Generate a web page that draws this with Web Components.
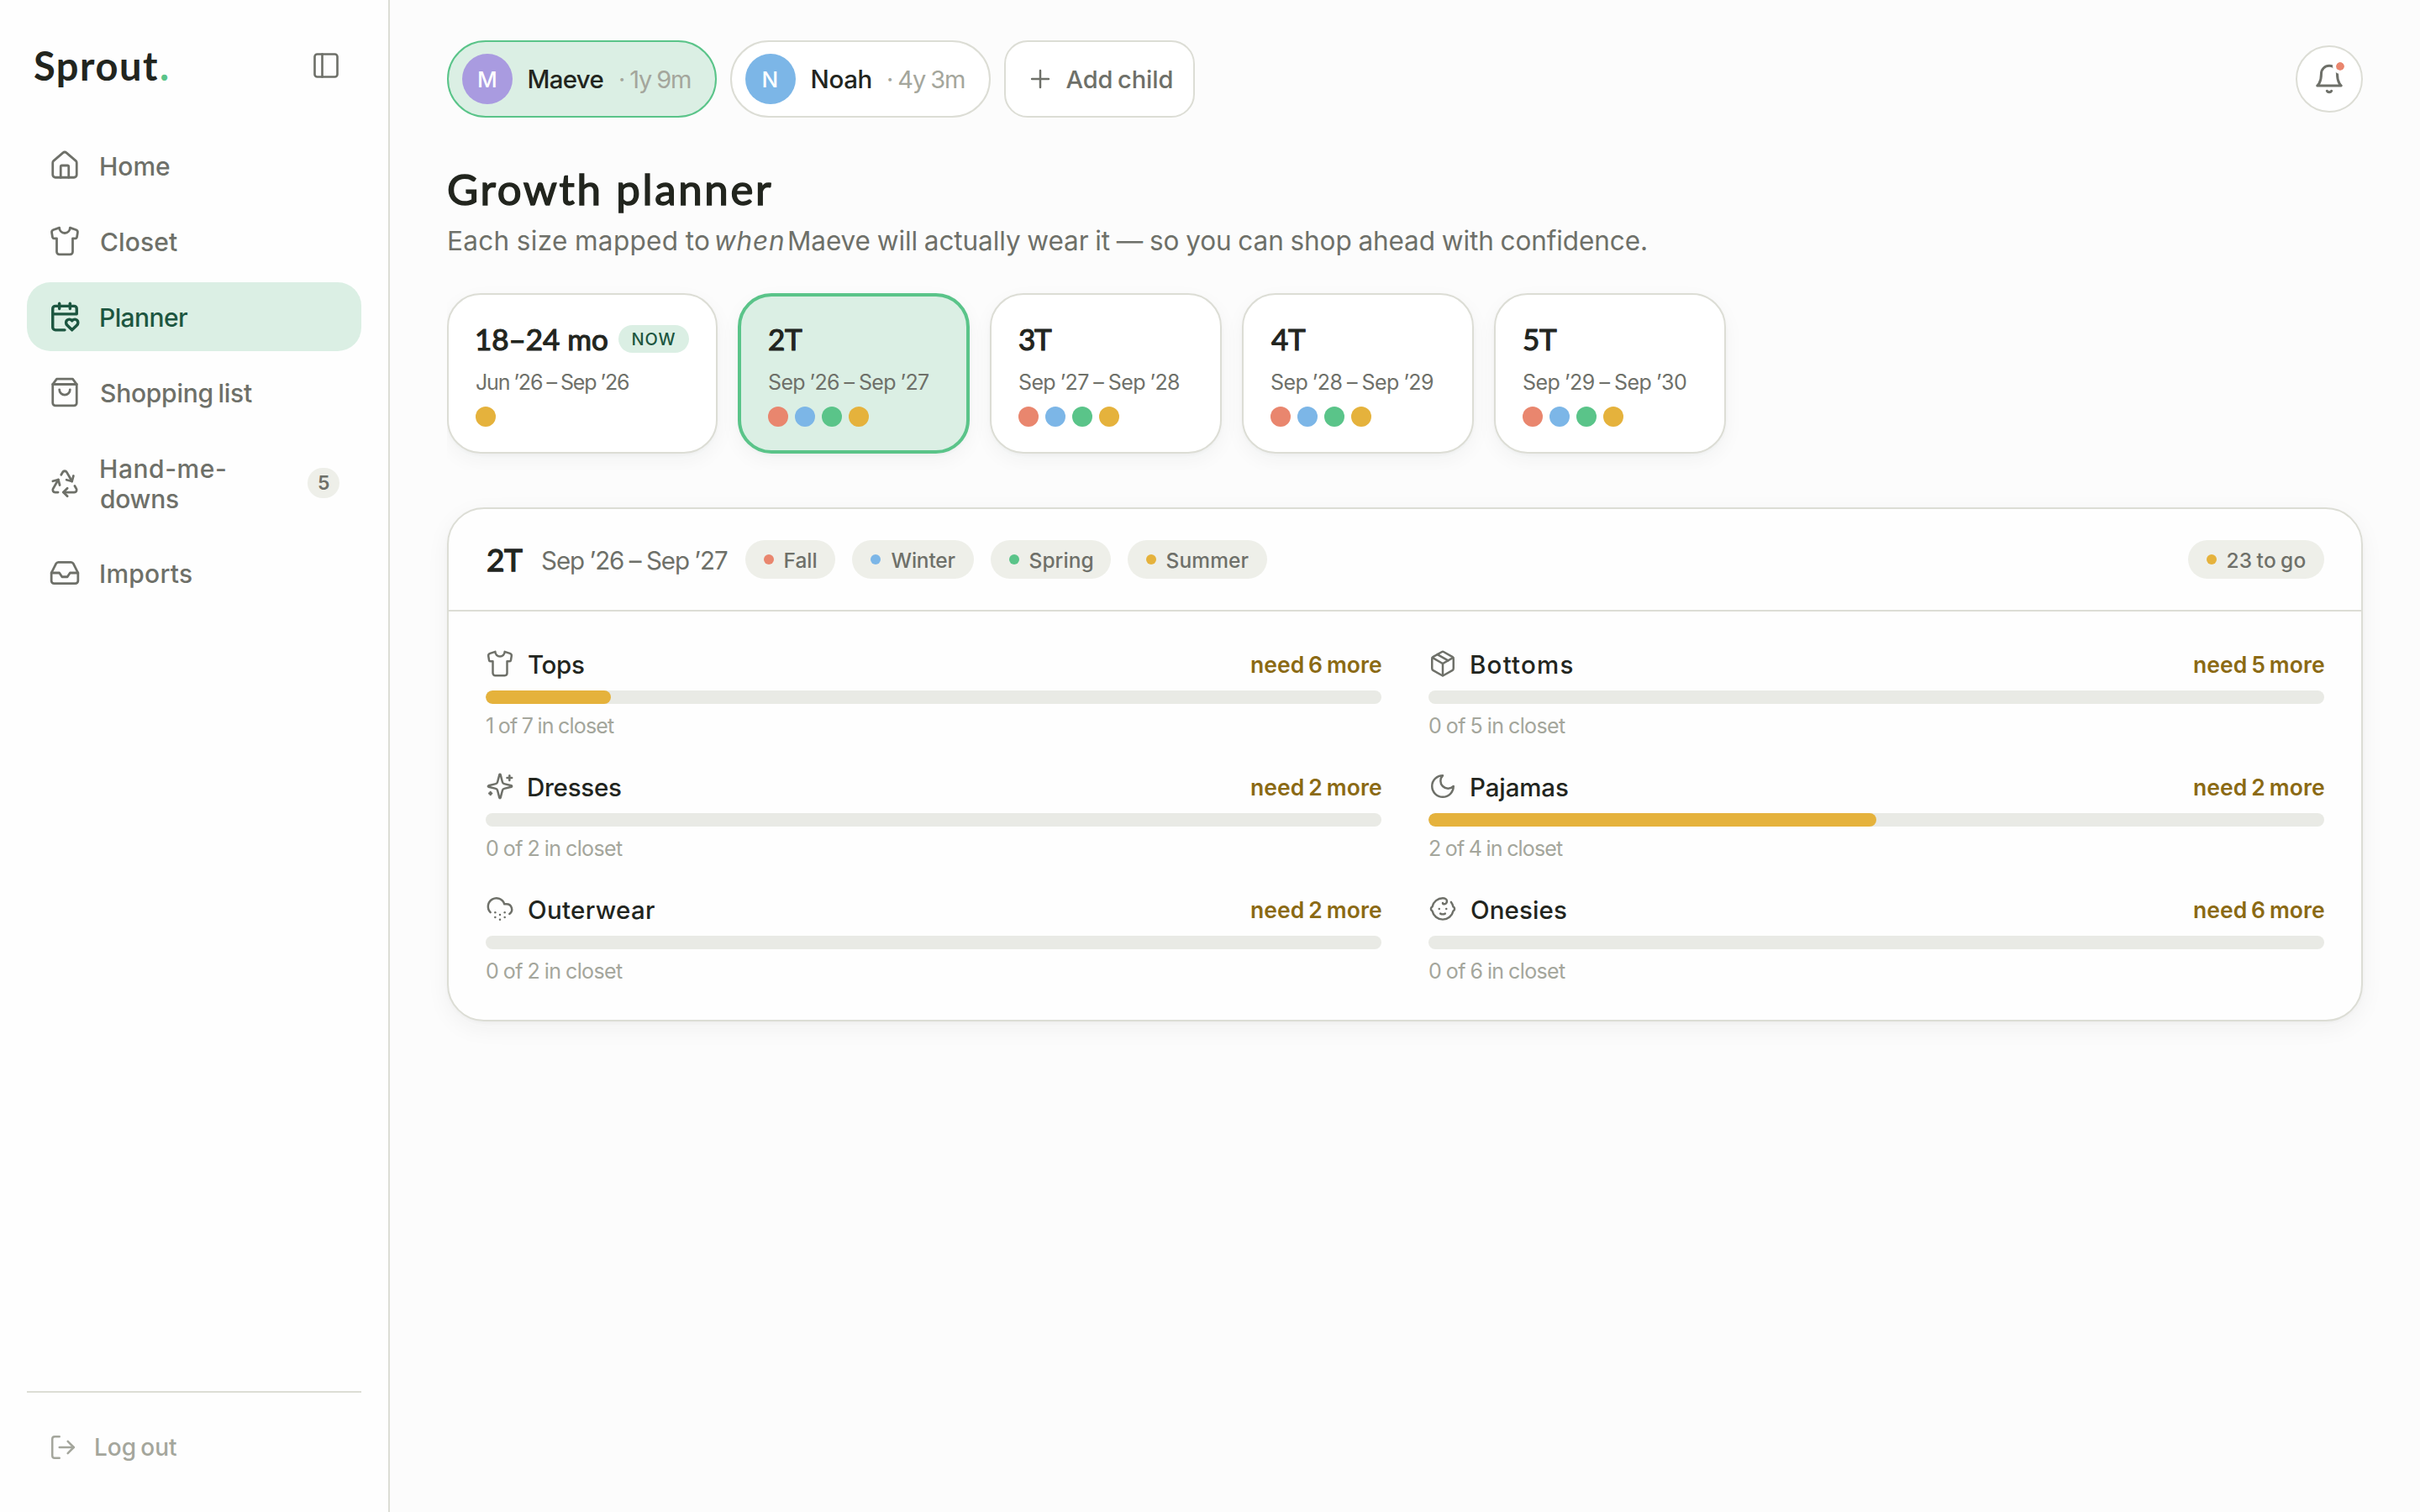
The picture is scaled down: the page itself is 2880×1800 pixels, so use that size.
<!DOCTYPE html>
<html lang="en">
<head>
<meta charset="utf-8">
<title>Sprout – Growth planner</title>
<style>
  html, body { margin: 0; height: 100%; }
  body {
    --ink: #22251e; --muted: #6e7069; --faint: #a4a69c; --line: #dcddd5; --chip: #eeefe9;
    --mint: #dbefe4; --forest: #1c5640; --green: #5ac489; --coral: #e9866e; --sky: #7cb6e7; --amber: #e5b23c;
    --body: Inter, "Liberation Sans", sans-serif;
    --display: Lato, Inter, sans-serif;
    background: #fcfcfc; color: var(--ink); font-family: var(--body); overflow: hidden;
  }
</style>
</head>
<body>
<sprout-app></sprout-app>
<script>
const ICONS = {
  panel: '<rect width="18" height="18" x="3" y="3" rx="2"/><path d="M9 3v18"/>',
  home: '<path d="M15 21v-8a1 1 0 0 0-1-1h-4a1 1 0 0 0-1 1v8"/><path d="M3 10a2 2 0 0 1 .709-1.528l7-5.999a2 2 0 0 1 2.582 0l7 5.999A2 2 0 0 1 21 10v9a2 2 0 0 1-2 2H5a2 2 0 0 1-2-2z"/>',
  shirt: '<path d="M20.38 3.46 16 2a4 4 0 0 1-8 0L3.62 3.46a2 2 0 0 0-1.34 2.23l.58 3.47a1 1 0 0 0 .99.84H6v10c0 1.1.9 2 2 2h8a2 2 0 0 0 2-2V10h2.15a1 1 0 0 0 .99-.84l.58-3.47a2 2 0 0 0-1.34-2.23z"/>',
  planner: '<path d="M3 10h18V6a2 2 0 0 0-2-2H5a2 2 0 0 0-2 2v14a2 2 0 0 0 2 2h7"/><path d="M8 2v4"/><path d="M16 2v4"/><path d="M21.29 14.7a2.43 2.43 0 0 0-2.65-.52c-.3.12-.57.3-.8.53l-.34.34-.35-.34a2.43 2.43 0 0 0-2.65-.53c-.3.12-.56.3-.79.53-.95.94-1 2.53.2 3.74L17.5 22l3.6-3.55c1.2-1.21 1.14-2.8.19-3.74Z"/>',
  bag: '<path d="M6 2 3 6v14a2 2 0 0 0 2 2h14a2 2 0 0 0 2-2V6l-3-4Z"/><path d="M3 6h18"/><path d="M16 10a4 4 0 0 1-8 0"/>',
  recycle: '<path d="M7 19H4.815a1.83 1.83 0 0 1-1.57-.881 1.785 1.785 0 0 1-.004-1.784L7.196 9.5"/><path d="M11 19h8.203a1.83 1.83 0 0 0 1.556-.89 1.784 1.784 0 0 0 0-1.775l-1.226-2.12"/><path d="m14 16-3 3 3 3"/><path d="M8.293 13.596 7.196 9.5 3.1 10.598"/><path d="m9.344 5.811 1.093-1.892A1.83 1.83 0 0 1 11.985 3a1.784 1.784 0 0 1 1.546.888l3.943 6.843"/><path d="m13.378 9.633 4.096 1.098 1.097-4.096"/>',
  inbox: '<path d="M22 12h-6l-2 3h-4l-2-3H2"/><path d="M5.45 5.11 2 12v6a2 2 0 0 0 2 2h16a2 2 0 0 0 2-2v-6l-3.45-6.89A2 2 0 0 0 16.76 4H7.24a2 2 0 0 0-1.79 1.11z"/>',
  logout: '<path d="m16 17 5-5-5-5"/><path d="M21 12H9"/><path d="M9 21H5a2 2 0 0 1-2-2V5a2 2 0 0 1 2-2h4"/>',
  plus: '<path d="M5 12h14"/><path d="M12 5v14"/>',
  bell: '<path d="M6 8a6 6 0 0 1 12 0c0 7 3 9 3 9H3s3-2 3-9"/><path d="M10.3 21a1.94 1.94 0 0 0 3.4 0"/>',
  sparkles: '<path d="M9.937 15.5A2 2 0 0 0 8.5 14.063l-6.135-1.582a.5.5 0 0 1 0-.962L8.5 9.936A2 2 0 0 0 9.937 8.5l1.582-6.135a.5.5 0 0 1 .963 0L14.063 8.5A2 2 0 0 0 15.5 9.937l6.135 1.581a.5.5 0 0 1 0 .964L15.5 14.063a2 2 0 0 0-1.437 1.437l-1.582 6.135a.5.5 0 0 1-.963 0z"/><path d="M20 3v4"/><path d="M22 5h-4"/><path d="M4 17v2"/><path d="M5 18H3"/>',
  snow: '<path d="M4 14.899A7 7 0 1 1 15.71 8h1.79a4.5 4.5 0 0 1 2.5 8.242"/><path d="M8 15h.01"/><path d="M8 19h.01"/><path d="M12 17h.01"/><path d="M12 21h.01"/><path d="M16 15h.01"/><path d="M16 19h.01"/>',
  box: '<path d="M11 21.73a2 2 0 0 0 2 0l7-4A2 2 0 0 0 21 16V8a2 2 0 0 0-1-1.73l-7-4a2 2 0 0 0-2 0l-7 4A2 2 0 0 0 3 8v8a2 2 0 0 0 1 1.73z"/><path d="M12 22V12"/><path d="M3.29 7 12 12l8.71-5"/><path d="m7.5 4.27 9 5.15"/>',
  moon: '<path d="M12 3a6 6 0 0 0 9 9 9 9 0 1 1-9-9Z"/>',
  baby: '<path d="M9 12h.01"/><path d="M15 12h.01"/><path d="M10 16c.5.3 1.2.5 2 .5s1.5-.2 2-.5"/><path d="M19 6.3a9 9 0 0 1 1.8 3.9 2 2 0 0 1 0 3.6 9 9 0 0 1-17.6 0 2 2 0 0 1 0-3.6A9 9 0 0 1 12 3c2 0 3.5 1.1 3.5 2.5s-.9 2.5-2 2.5c-.8 0-1.5-.4-1.5-1"/>'
};

class Base extends HTMLElement {
  connectedCallback() {
    if (this.shadowRoot) return;
    this.attachShadow({ mode: 'open' }).innerHTML = this.view();
  }
  a(name, fallback = '') { return this.getAttribute(name) ?? fallback; }
}

customElements.define('s-icon', class extends Base {
  view() {
    const s = this.a('size', 38);
    return `<style>:host{display:block;flex:none;width:${s}px;height:${s}px}svg{display:block}</style>
      <svg width="${s}" height="${s}" viewBox="0 0 24 24" fill="none" stroke="currentColor" stroke-width="${this.a('stroke', 1.75)}" stroke-linecap="round" stroke-linejoin="round">${ICONS[this.a('name')]}</svg>`;
  }
});

/* A single line of text whose tracking is set so that its ink fills the width w. */
const pen = document.createElement('canvas').getContext('2d');
customElements.define('s-text', class extends Base {
  view() {
    const size = +this.a('size', 30), weight = this.a('weight', 500), w = +this.a('w');
    const display = this.hasAttribute('display'), slant = this.hasAttribute('italic') ? 'italic' : 'normal';
    const text = this.a('text'), spaces = text.split(' ').length - 1;
    pen.font = `${slant} ${weight} ${size}px ${display ? 'Lato' : 'Inter'}`;
    const m = pen.measureText(text), ink = m.actualBoundingBoxLeft + m.actualBoundingBoxRight;
    const word = display ? 0 : (weight < 500 ? -0.03 : -0.07) * size;
    const track = text.length > 1 ? (w - ink - spaces * word) / (text.length - 1) : 0;
    return `<style>
      :host{display:block;flex:none;width:${w}px;padding-top:${this.a('drop', display ? 0 : 2)}px;white-space:nowrap;color:${this.a('color', 'inherit')};
        font:${slant} ${weight} ${size}px/1.2 ${display ? 'var(--display)' : 'var(--body)'}}
      span{display:block;width:max-content;margin-left:${m.actualBoundingBoxLeft}px;letter-spacing:${track.toFixed(3)}px;word-spacing:${word}px;
        -webkit-text-stroke:${this.a('thicken', 0)}px currentColor;stroke-linejoin:round}
      </style><span>${text}</span>`;
  }
});

customElements.define('s-dot', class extends Base {
  view() {
    const s = this.a('size', 24);
    return `<style>:host{display:block;flex:none;width:${s}px;height:${s}px;border-radius:50%;background:var(--${this.a('tone')})}</style>`;
  }
});

customElements.define('nav-item', class extends Base {
  view() {
    const on = this.hasAttribute('active');
    return `<style>
      :host{display:flex;align-items:center;box-sizing:border-box;min-height:82px;padding:0 26px;border-radius:28px;
        color:${on ? 'var(--forest)' : 'var(--muted)'};background:${on ? 'var(--mint)' : 'none'}}
      .label{margin-left:24px;flex:1;display:flex;flex-direction:column}
      </style>
      <s-icon name="${this.a('icon')}" stroke="${on ? 2.15 : 1.75}"></s-icon><div class="label"><slot></slot></div><slot name="end"></slot>`;
  }
});

customElements.define('app-sidebar', class extends Base {
  view() {
    return `<style>
      :host{display:flex;flex-direction:column;box-sizing:border-box;width:464px;height:1800px;flex:none;background:#fefefe;border-right:2px solid var(--line)}
      header{height:156px;box-sizing:border-box;display:flex;align-items:center;padding:0 56px 0 41px;justify-content:space-between;color:var(--muted)}
      .logo{display:flex;gap:4px;color:var(--ink)}
      nav{display:flex;flex-direction:column;gap:8px;padding:0 32px;flex:1}
      .two{height:117px}
      .badge{width:38px;height:36px;border-radius:18px;background:var(--chip);display:flex;align-items:center;justify-content:center}
      footer{margin:0 32px;border-top:2px solid var(--line);height:144px;box-sizing:border-box;padding:0 26px 12px;display:flex;align-items:center;gap:22px;color:var(--faint)}
      .tight{display:flex;height:36px;align-items:center}
      </style>
      <header><div class="logo"><s-text display text="Sprout" w="147" size="47" weight="700"></s-text><s-text display text="." w="7" size="47" weight="700" color="var(--green)"></s-text></div>
        <s-icon name="panel" size="36"></s-icon></header>
      <nav>
        <nav-item icon="home"><s-text text="Home" w="82"></s-text></nav-item>
        <nav-item icon="shirt"><s-text text="Closet" w="91"></s-text></nav-item>
        <nav-item icon="planner" active><s-text text="Planner" w="103"></s-text></nav-item>
        <nav-item icon="bag"><s-text text="Shopping list" w="180"></s-text></nav-item>
        <nav-item icon="recycle" class="two"><div class="tight"><s-text text="Hand-me-" w="148"></s-text></div><div class="tight"><s-text text="downs" w="92"></s-text></div>
          <div class="badge" slot="end"><s-text text="5" w="12" size="23" weight="600"></s-text></div></nav-item>
        <nav-item icon="inbox"><s-text text="Imports" w="108"></s-text></nav-item>
      </nav>
      <footer><s-icon name="logout" size="34"></s-icon><s-text text="Log out" w="96" size="28"></s-text></footer>`;
  }
});

customElements.define('child-chip', class extends Base {
  view() {
    const on = this.hasAttribute('active');
    return `<style>
      :host{display:flex;align-items:center;box-sizing:border-box;height:92px;padding:0 29px 0 16px;border-radius:46px;width:${this.a('width')}px;
        border:2px solid var(${on ? '--green' : '--line'});background:${on ? 'var(--mint)' : '#fff'}}
      .av{width:60px;height:60px;border-radius:50%;display:flex;align-items:center;justify-content:center;margin-right:19.5px;background:${this.a('tone')}}
      .age{margin-left:auto}
      </style>
      <div class="av"><s-text text="${this.a('name')[0]}" w="${this.a('iw')}" size="26" weight="500" color="#fff"></s-text></div>
      <s-text text="${this.a('name')}" w="${this.a('nw')}" size="29.5" weight="500"></s-text>
      <s-text class="age" text="· ${this.a('age')}" w="${this.a('aw')}" size="29" weight="400" color="var(--faint)"></s-text>`;
  }
});

customElements.define('top-bar', class extends Base {
  view() {
    return `<style>
      :host{display:flex;align-items:center;gap:16px;height:92px}
      .add{display:flex;align-items:center;box-sizing:border-box;width:227px;height:92px;border:2px solid var(--line);border-radius:28px;background:#fff;padding-left:24px;gap:13.5px;color:var(--muted)}
      .bell{position:relative;margin-left:auto;box-sizing:border-box;width:80px;height:80px;border:2px solid var(--line);border-radius:50%;background:#fff;display:flex;align-items:center;justify-content:center;color:var(--muted)}
      .bell i{position:absolute;left:42px;top:14px;width:10px;height:10px;border:4px solid #fff;border-radius:50%;background:var(--coral);background-clip:padding-box}
      </style>
      <child-chip active name="Maeve" age="1y 9m" tone="#a99be0" width="321" iw="20" nw="88" aw="84"></child-chip>
      <child-chip name="Noah" age="4y 3m" tone="var(--sky)" width="310" iw="17" nw="70" aw="91"></child-chip>
      <div class="add"><s-icon name="plus" size="34"></s-icon><s-text text="Add child" w="126" size="29" drop="3"></s-text></div>
      <div class="bell"><s-icon name="bell" stroke="1.9"></s-icon><i></i></div>`;
  }
});

customElements.define('size-card', class extends Base {
  view() {
    const on = this.hasAttribute('active');
    return `<style>
      :host{display:flex;flex-direction:column;justify-content:center;box-sizing:border-box;height:191px;flex:none;width:${this.a('width', 276)}px;padding:0 32px;border-radius:40px;
        border:${on ? '4px solid var(--green)' : '2px solid var(--line)'};background:${on ? 'var(--mint)' : '#fff'};
        box-shadow:0 2px 4px rgba(30,35,45,.03),0 8px 24px rgba(30,35,45,.045)}
      .t{height:44px;margin-bottom:1px;display:flex;align-items:center;gap:13px}
      .d{height:31px;margin:12px 0 15px;display:flex;align-items:center;color:var(--muted)}
      .s{display:flex;gap:8px}
      .t,.d{padding-left:1px}
      </style>
      <div class="t"><s-text display text="${this.a('label')}" w="${this.a('lw')}" size="35" weight="400" thicken="1.2"></s-text><slot></slot></div>
      <div class="d"><s-text text="${this.a('dates')}" w="${this.a('dw')}" size="25" weight="400"></s-text></div>
      <div class="s">${this.a('seasons').split(' ').map(t => `<s-dot tone="${t}"></s-dot>`).join('')}</div>`;
  }
});

customElements.define('s-pill', class extends Base {
  view() {
    return `<style>
      :host{display:flex;align-items:center;box-sizing:border-box;flex:none;height:46px;width:${this.a('width')}px;padding-left:22px;gap:12.5px;border-radius:23px;background:var(--chip);color:var(--muted)}
      </style><s-dot size="12" tone="${this.a('tone')}"></s-dot><s-text text="${this.a('text')}" w="${this.a('w')}" size="24.5" drop="3"></s-text>`;
  }
});

customElements.define('category-row', class extends Base {
  view() {
    return `<style>
      :host{display:block}
      .h{display:flex;align-items:center;height:40px;color:var(--muted)}
      .h>:nth-child(2){margin-left:17px}
      .h>:nth-child(3){margin-left:auto}
      .bar{height:16px;margin:12px 0 10px;border-radius:8px;background:#e9eae5;overflow:hidden}
      .bar div{height:16px;border-radius:8px;background:var(--amber);width:${this.a('fill', 0)}%}
      .n{height:30px;margin-bottom:1px;display:flex;align-items:center;padding-left:1px}
      </style>
      <div class="h"><s-icon name="${this.a('icon')}" size="34"></s-icon>
        <s-text text="${this.a('name')}" w="${this.a('nw')}" size="29.5" color="var(--ink)" drop="4"></s-text>
        <s-text text="need ${this.a('need')} more" w="155" size="26.5" weight="600" color="#8b6a14" drop="4"></s-text></div>
      <div class="bar"><div></div></div>
      <div class="n"><s-text text="${this.a('note')}" w="${this.a('tw')}" size="25" weight="400" color="var(--faint)"></s-text></div>`;
  }
});

customElements.define('size-panel', class extends Base {
  view() {
    return `<style>
      :host{display:block;box-sizing:border-box;height:612px;margin-top:44px;border:2px solid var(--line);border-radius:44px;background:#fefefe;
        box-shadow:0 2px 4px rgba(30,35,45,.03),0 8px 28px rgba(30,35,45,.05)}
      header{display:flex;align-items:center;height:120px;padding:0 44px 0 46px;gap:20px;border-bottom:2px solid var(--line)}
      header>:nth-child(2){margin:0 1px 0 3px}
      header>:last-child{margin-left:auto}
      .grid{display:grid;grid-template-columns:1fr 1fr;gap:37px 56px;padding:42px 44px 43px}
      </style>
      <header>
        <s-text display text="2T" w="42" size="37" weight="400" thicken="1.3"></s-text>
        <s-text text="Sep ’26 – Sep ’27" w="221" size="29.5" weight="400" color="var(--muted)" drop="3"></s-text>
        <s-pill tone="coral" text="Fall" w="38" width="107"></s-pill>
        <s-pill tone="sky" text="Winter" w="76" width="145"></s-pill>
        <s-pill tone="green" text="Spring" w="75" width="143"></s-pill>
        <s-pill tone="amber" text="Summer" w="97" width="166"></s-pill>
        <s-pill tone="amber" text="23 to go" w="93" width="162"></s-pill>
      </header>
      <div class="grid">
        <category-row icon="shirt" name="Tops" nw="66" need="6" fill="14" note="1 of 7 in closet" tw="152"></category-row>
        <category-row icon="box" name="Bottoms" nw="120.5" need="5" note="0 of 5 in closet" tw="162"></category-row>
        <category-row icon="sparkles" name="Dresses" nw="110" need="2" note="0 of 2 in closet" tw="162"></category-row>
        <category-row icon="moon" name="Pajamas" nw="115" need="2" fill="50" note="2 of 4 in closet" tw="159"></category-row>
        <category-row icon="snow" name="Outerwear" nw="150" need="2" note="0 of 2 in closet" tw="162"></category-row>
        <category-row icon="baby" name="Onesies" nw="113" need="6" note="0 of 6 in closet" tw="162"></category-row>
      </div>`;
  }
});

customElements.define('sprout-app', class extends Base {
  view() {
    return `<style>
      :host{display:flex;width:2880px;height:1800px}
      main{flex:1;min-width:0;padding:48px 68px 0}
      .title{display:flex;align-items:center;height:64px;margin-top:52px;padding-left:2px}
      .sub{display:flex;align-items:center;height:48px;margin-top:6px;padding-left:2px;color:var(--muted)}
      .sub>:nth-child(2){margin:0 6px 0 8px}
      .sizes{display:flex;gap:24px;margin-top:31px;padding:8px 0 20px;overflow:hidden}
      .now{display:flex;align-items:center;justify-content:center;width:84px;height:33px;border-radius:17px;background:var(--mint);color:var(--forest)}
      </style>
      <app-sidebar></app-sidebar>
      <main>
        <top-bar></top-bar>
        <div class="title"><s-text display text="Growth planner" w="384" size="51" weight="400" thicken="1.5" drop="2"></s-text></div>
        <div class="sub"><s-text text="Each size mapped to" w="310" size="31.5" weight="400"></s-text><s-text italic text="when" w="81" size="31.5" weight="400"></s-text><s-text text="Maeve will actually wear it — so you can shop ahead with confidence." w="1020" size="31.5" weight="400"></s-text></div>
        <div class="sizes">
          <size-card width="322" label="18–24 mo" lw="156" dates="Jun ’26 – Sep ’26" dw="181" seasons="amber"><div class="now"><s-text text="NOW" w="51" size="20" weight="500"></s-text></div></size-card>
          <size-card active label="2T" lw="40" dates="Sep ’26 – Sep ’27" dw="190" seasons="coral sky green amber"></size-card>
          <size-card label="3T" lw="39" dates="Sep ’27 – Sep ’28" dw="190" seasons="coral sky green amber"></size-card>
          <size-card label="4T" lw="41" dates="Sep ’28 – Sep ’29" dw="192" seasons="coral sky green amber"></size-card>
          <size-card label="5T" lw="40" dates="Sep ’29 – Sep ’30" dw="194" seasons="coral sky green amber"></size-card>
        </div>
        <size-panel></size-panel>
      </main>`;
  }
});
</script>
</body>
</html>
